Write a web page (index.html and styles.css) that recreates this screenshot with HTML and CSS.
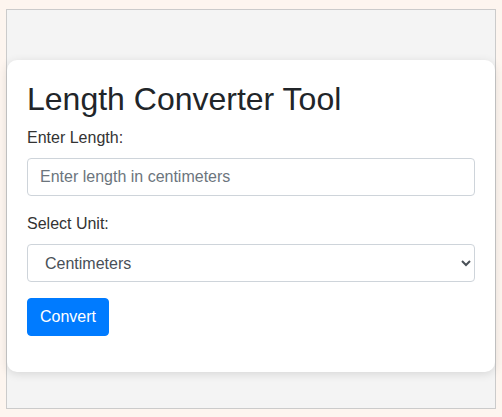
FILE: index.html
```html
<!DOCTYPE html>
<html>
<head>
<meta charset="utf-8">
<link rel="stylesheet" href="styles.css">
</head>
<body>
<div class="frame">
  <div class="card">
    <h1 class="title">Length Converter Tool</h1>
    <div class="group">
      <label class="label" for="len">Enter Length:</label>
      <input class="control" id="len" type="text" placeholder="Enter length in centimeters">
    </div>
    <div class="group">
      <label class="label" for="unit">Select Unit:</label>
      <select class="control select" id="unit">
        <option>Centimeters</option>
        <option>Meters</option>
        <option>Inches</option>
      </select>
    </div>
    <div class="group">
      <button class="btn">Convert</button>
    </div>
  </div>
</div>
</body>
</html>
```
FILE: styles.css
```css
html, body {
  margin: 0;
  padding: 0;
  background: #fdf5ef;
  font-family: "Liberation Sans", Arial, sans-serif;
  color: #212529;
}
body {
  padding: 9px 0 0 6px;
}
.frame {
  box-sizing: border-box;
  width: 490px;
  height: 400px;
  border: 1px solid #cbcbcb;
  background: #f4f4f4;
  padding-top: 50px;
}
.card {
  background: #fff;
  border-radius: 10px;
  box-shadow: 0 2px 10px rgba(0, 0, 0, 0.12);
  padding: 20px 20px 20px 20px;
}
.title {
  margin: 0 0 8px 0;
  font-size: 32px;
  font-weight: 400;
  line-height: 1.2;
  color: #212529;
}
.group {
  margin-bottom: 16px;
}
.label {
  display: block;
  font-size: 16px;
  line-height: 24px;
  margin-bottom: 8px;
  color: #333;
}
.control {
  display: block;
  box-sizing: border-box;
  width: 100%;
  height: 38px;
  padding: 6px 12px;
  font-family: inherit;
  font-size: 16px;
  line-height: 1.5;
  color: #495057;
  background: #fff;
  border: 1px solid #ced4da;
  border-radius: 4px;
}
.control::placeholder {
  color: #6c757d;
}
.select {
  padding-left: 13px;
}
.btn {
  font-family: inherit;
  font-size: 16px;
  line-height: 1.5;
  padding: 6px 12px;
  color: #fff;
  background: #007bff;
  border: 1px solid #007bff;
  border-radius: 4px;
}
```
